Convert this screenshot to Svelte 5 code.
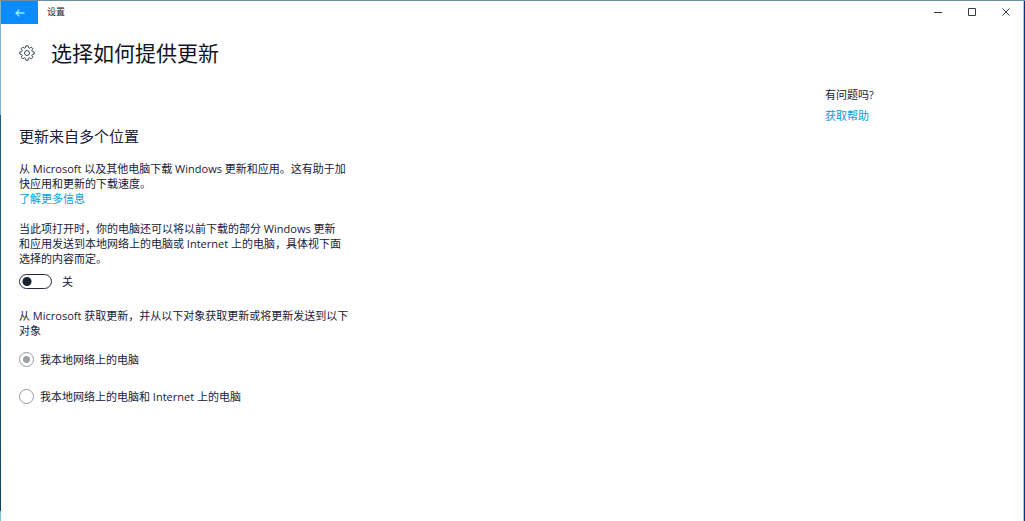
<script>
  let sharing = $state(false);
  let source = $state('local');
</script>

<div class="window">
  <header class="titlebar">
    <button class="back" aria-label="返回">
      <svg width="10" height="8" viewBox="0 0 10 8" fill="none" stroke="currentColor" stroke-width="1.3">
        <path d="M9.5 4H1M4.3 .7L1 4l3.3 3.3" />
      </svg>
    </button>
    <span class="app-name">设置</span>
    <div class="controls">
      <button aria-label="最小化">
        <svg width="10" height="10" viewBox="0 0 10 10"><path d="M1 5.5h8" /></svg>
      </button>
      <button aria-label="最大化">
        <svg width="10" height="10" viewBox="0 0 10 10"><path d="M1.5 1.5h7v7h-7z" /></svg>
      </button>
      <button aria-label="关闭">
        <svg width="10" height="10" viewBox="0 0 10 10"><path d="M1.5 1.5l7 7M8.5 1.5l-7 7" /></svg>
      </button>
    </div>
  </header>

  <div class="heading">
    <svg class="gear" width="16" height="16" viewBox="0 0 16 16" fill="none" stroke="currentColor" stroke-linejoin="round">
      <path d="M6.9 .8h2.2l.4 1.9 1.2.5 1.6-1.1 1.6 1.6-1.1 1.6.5 1.2 1.9.4v2.2l-1.9.4-.5 1.2 1.1 1.6-1.6 1.6-1.6-1.1-1.2.5-.4 1.9H6.9l-.4-1.9-1.2-.5-1.6 1.1-1.6-1.6 1.1-1.6-.5-1.2-1.9-.4V6.9l1.9-.4.5-1.2-1.1-1.6 1.6-1.6 1.6 1.1 1.2-.5z" />
      <circle cx="8" cy="8" r="2.5" />
    </svg>
    <h1>选择如何提供更新</h1>
  </div>

  <div class="content">
    <main>
      <h2>更新来自多个位置</h2>
      <p>
        从 Microsoft 以及其他电脑下载 Windows 更新和应用。这有助于加<br />快应用和更新的下载速度。<br />
        <a href="#more">了解更多信息</a>
      </p>
      <p>
        当此项打开时，你的电脑还可以将以前下载的部分 Windows 更新<br />和应用发送到本地网络上的电脑或 Internet 上的电脑，具体视下面<br />选择的内容而定。
      </p>
      <label class="toggle">
        <input type="checkbox" role="switch" bind:checked={sharing} />
        <span>{sharing ? '开' : '关'}</span>
      </label>
      <fieldset>
        <legend>从 Microsoft 获取更新，并从以下对象获取更新或将更新发送到以下<br />对象</legend>
        <label class="option">
          <input type="radio" name="source" value="local" bind:group={source} />
          <span>我本地网络上的电脑</span>
        </label>
        <label class="option">
          <input type="radio" name="source" value="internet" bind:group={source} />
          <span>我本地网络上的电脑和 Internet 上的电脑</span>
        </label>
      </fieldset>
    </main>
    <aside>
      <p>有问题吗?</p>
      <a href="#help">获取帮助</a>
    </aside>
  </div>
</div>

<style>
  :global(body) {
    background: #fff;
  }
  .window {
    box-sizing: border-box;
    min-height: 100vh;
    padding: 1px 2px 0 1px;
    background:
      linear-gradient(#6f8fa3, #6f8fa3) top / 100% 1px no-repeat,
      linear-gradient(#7fb4cc 22%, #1f5f86 22% 60%, #0f4355 98%, #7fc4d4 98%) left / 1px 100% no-repeat,
      linear-gradient(#0b3476, #0b3476) right / 1px 100% no-repeat,
      linear-gradient(90deg, #a9cbe8, #a9cbe8) right / 2px 100% no-repeat,
      #fff;
    color: #182038;
    font: 11px/15px "Open Sans", "Noto Sans CJK SC", sans-serif;
  }
  h1, h2, p, fieldset, legend {
    margin: 0;
    padding: 0;
    border: 0;
    font-weight: 400;
  }
  button {
    display: grid;
    place-items: center;
    padding: 0;
    border: 0;
    background: none;
    color: inherit;
  }
  a {
    color: #0a9bd8;
    text-decoration: none;
  }
  .titlebar {
    display: flex;
    height: 22px;
    align-items: flex-start;
    line-height: 22px;
  }
  .back {
    width: 37px;
    height: 23px;
    background: #0a8cff;
    color: #8ff0ff;
  }
  .app-name {
    margin-left: 9px;
    font-size: 9px;
  }
  .controls {
    display: flex;
    margin-left: auto;
  }
  .controls button {
    width: 34px;
    height: 22px;
  }
  .controls path {
    fill: none;
    stroke: #333b42;
  }
  .heading {
    display: flex;
    align-items: center;
    gap: 16px;
    padding: 14px 18px 0;
  }
  .gear {
    color: #3c4655;
  }
  h1 {
    color: #10141f;
    font-size: 21px;
    line-height: 32px;
  }
  .content {
    display: grid;
    grid-template-columns: minmax(0, 1fr) 198px;
    padding-left: 18px;
  }
  main {
    padding-top: 56px;
  }
  h2 {
    margin-bottom: 14px;
    font-size: 15px;
    line-height: 22px;
  }
  main p {
    margin-bottom: 15px;
  }
  .toggle {
    display: flex;
    align-items: center;
    gap: 10px;
    width: max-content;
    margin-top: -7px;
  }
  input {
    box-sizing: border-box;
    margin: 0;
    appearance: none;
  }
  .toggle input {
    width: 33px;
    height: 15px;
    border: 1px solid #222b38;
    border-radius: 8px;
    background: radial-gradient(circle at 7px 50%, #1c2431 4px, transparent 5px);
  }
  .toggle input:checked {
    background: radial-gradient(circle at 24px 50%, #1c2431 4px, transparent 5px);
  }
  fieldset {
    margin-top: 19px;
  }
  legend {
    margin-bottom: 14px;
  }
  .option {
    display: flex;
    align-items: center;
    gap: 6px;
    width: max-content;
    margin-bottom: 22px;
  }
  .option input {
    width: 15px;
    height: 15px;
    border: 1px solid #949ba3;
    border-radius: 50%;
  }
  .option input:checked {
    background: radial-gradient(circle, #9aa0a5 3px, transparent 4px);
  }
  aside {
    padding-top: 18px;
  }
  aside p {
    margin-bottom: 6px;
  }
</style>
